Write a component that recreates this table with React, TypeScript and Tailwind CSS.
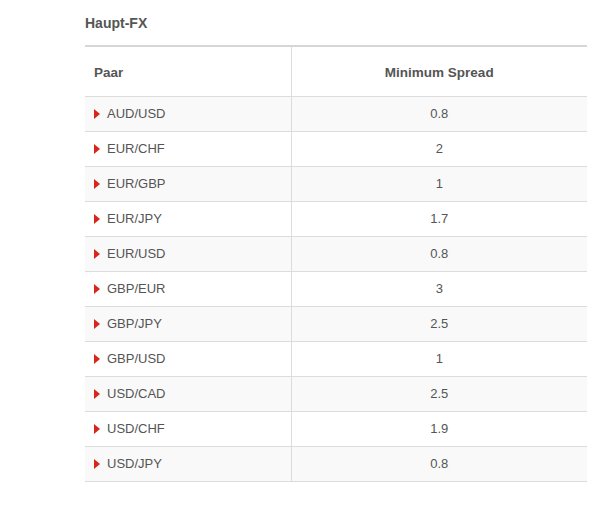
const rows: [string, string][] = [
  ["AUD/USD", "0.8"],
  ["EUR/CHF", "2"],
  ["EUR/GBP", "1"],
  ["EUR/JPY", "1.7"],
  ["EUR/USD", "0.8"],
  ["GBP/EUR", "3"],
  ["GBP/JPY", "2.5"],
  ["GBP/USD", "1"],
  ["USD/CAD", "2.5"],
  ["USD/CHF", "1.9"],
  ["USD/JPY", "0.8"],
];

const Arrow = () => (
  <svg width="6" height="10" viewBox="0 0 6 10" className="shrink-0">
    <path d="M0 0 L6 5 L0 10 Z" fill="#d9261c" />
  </svg>
);

export default function App() {
  return (
    <div className="min-h-[508px] bg-white pl-[85px] pt-[14px] font-['Liberation_Sans',Arial,sans-serif] text-[#555]">
      <h3 className="text-[14px] font-bold leading-[18px] text-[#555]">Haupt-FX</h3>
      <table className="mt-[13px] w-[502px] border-collapse border-t-2 border-[#d6d6d6] text-[13px]">
        <thead>
          <tr className="h-[50px] border-b border-[#dcdcdc]">
            <th className="w-[206px] border-r border-[#dcdcdc] pl-[9px] pt-[4px] text-left text-[13.5px] font-bold">Paar</th>
            <th className="pt-[4px] text-center text-[13.5px] font-bold">Minimum Spread</th>
          </tr>
        </thead>
        <tbody>
          {rows.map(([pair, spread], i) => (
            <tr
              key={pair}
              className={`h-[35px] border-b border-[#dcdcdc] ${i % 2 === 0 ? "bg-[#f9f9f9]" : "bg-white"}`}
            >
              <td className="border-r border-[#dcdcdc] pl-[9px]">
                <div className="flex items-center gap-[7px]">
                  <Arrow />
                  <span>{pair}</span>
                </div>
              </td>
              <td className="text-center">{spread}</td>
            </tr>
          ))}
        </tbody>
      </table>
    </div>
  );
}
